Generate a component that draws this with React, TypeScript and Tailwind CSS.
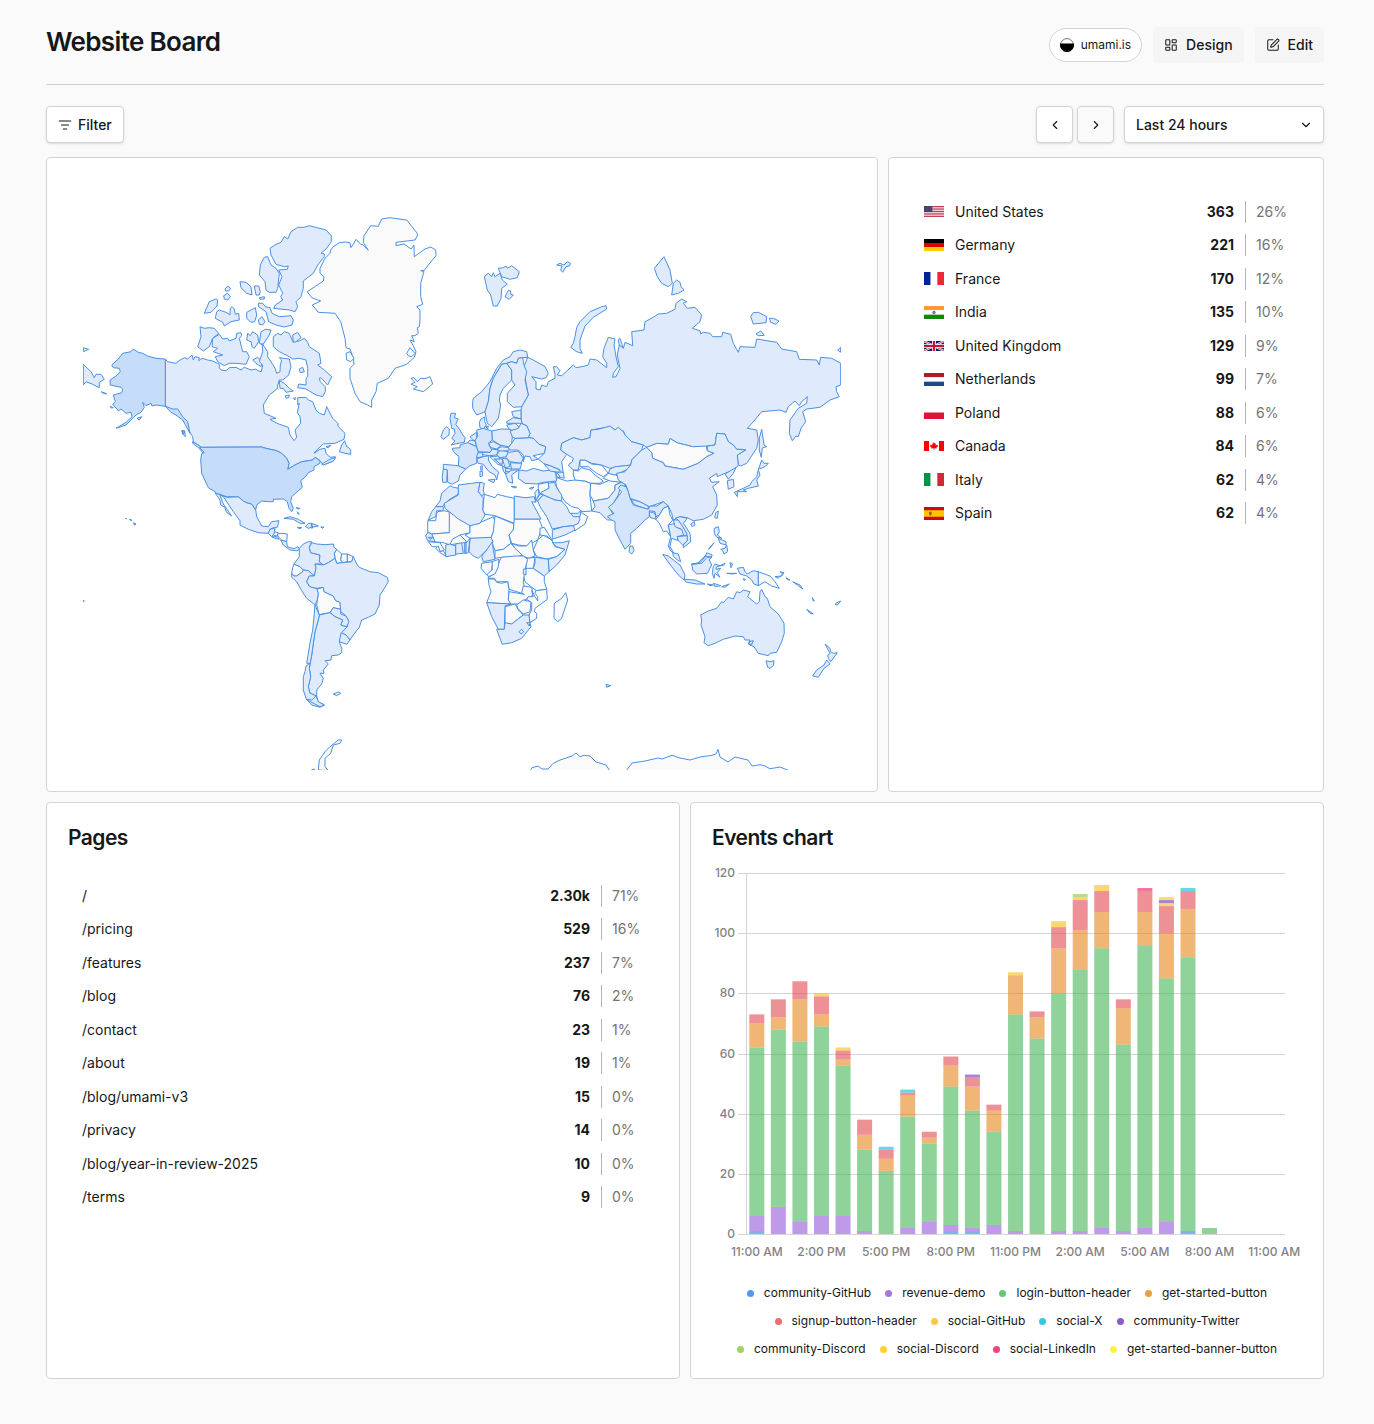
import React from "react";
import { ChevronDown, ChevronLeft, ChevronRight, LayoutDashboard, ListFilter, SquarePen } from "lucide-react";

/* ------------------------------------------------------------------ */
/* World map                                                           */
/* ------------------------------------------------------------------ */

// Outlines are digitised at three times map scale on separate sheets.
// A letter in an outline switches to the sheet with that origin.
const SHEETS: Record<string, [number, number]> = {
  A: [76, 205],
  B: [300, 205],
  C: [540, 240],
  D: [90, 400],
  E: [415, 395],
  F: [415, 500],
  G: [600, 420],
  H: [270, 540],
  K: [500, 740],
};

function outline(data: string) {
  let origin = SHEETS.A;
  let d = "";
  for (const token of data.trim().split(/\s+/)) {
    if (SHEETS[token]) {
      origin = SHEETS[token];
      continue;
    }
    const [x, y] = token.split(",").map(Number);
    d += `${d ? "L" : "M"}${(origin[0] + x / 3).toFixed(1)} ${(origin[1] + y / 3).toFixed(1)}`;
  }
  return d + "Z";
}

const NO_DATA = [
  // Greenland and Iceland
  "B 90,145 92,135 100,125 118,113 135,111 150,113 152,128 160,118 168,103 182,118 190,120 205,136 190,112 192,92 212,62 235,64 245,42 270,38 320,45 352,85 352,92 345,105 288,112 288,122 312,117 333,132 342,120 343,155 375,132 392,126 407,135 408,152 385,180 372,197 362,197 372,199 362,235 362,275 368,298 350,305 360,315 360,345 358,365 352,368 355,385 345,392 335,392 343,410 330,405 340,422 348,440 343,457 320,478 285,490 265,520 232,535 228,560 215,585 215,607 203,600 180,590 165,565 150,520 150,490 162,478 160,460 150,432 138,428 135,400 122,350 105,325 55,322 37,300 62,288 35,278 22,260 70,228 72,215 60,205 60,190 75,160",
  "B 138,445 150,440 162,460 152,470 140,465",
  "B 320,445 330,428 345,445 335,455 325,452",
  "B 333,520 342,518 352,530 362,520 375,521 390,515 398,537 370,560 340,552 352,545 333,538 345,532",
  // Central America
  "D 560,402 575,400 592,402 590,425 575,420 565,410",
  "D 553,395 565,398 560,408 550,405",
  // South America
  "H 200,28 215,42 212,60 218,68 200,70 195,55 193,40",
  "H 215,42 232,42 232,65 218,68 212,60",
  "H 232,42 250,50 245,65 232,65",
  "H 72,72 90,80 100,90 98,95 80,108 72,108 65,100 68,82",
  "H 140,148 160,142 162,155 190,168 197,182 210,185 212,208 190,203 180,218 155,222 148,225 140,195 145,160",
  // Africa
  "F 38,62 62,62 65,40 68,35 85,32 103,35 107,98 50,102 38,95",
  "F 103,35 165,75 165,98 135,105 115,125 105,135 85,128 55,125 50,102 103,98",
  "F 165,75 185,72 235,50 240,65 235,95 228,115 200,115 165,115 150,105 165,98",
  "F 240,48 298,72 295,90 282,105 288,130 265,148 240,152 230,125 228,115 235,95",
  "E 208,298 240,308 247,298 275,305 298,310 298,385 240,362 210,358 203,345",
  "F 298,57 372,57 382,82 375,100 368,120 350,130 335,138 310,135 290,130 282,105 295,90",
  "F 240,152 265,148 288,130 300,145 325,165 300,172 260,172 240,175",
  "F 290,130 310,138 335,138 350,120 355,150 360,168 340,175 325,168 300,145",
  "F 368,120 385,105 410,120 420,140 450,148 425,170 395,177 365,170 355,150",
  "F 375,85 388,82 412,122 395,108 375,105",
  "F 335,175 360,172 355,205 332,208",
  "F 332,205 355,205 388,228 388,245 395,268 365,272 350,262 330,245 325,225",
  "F 260,172 300,168 325,168 338,178 330,208 325,245 330,270 320,280 282,268 278,245 245,245 238,235 218,235 240,218 255,180",
  "F 220,230 215,220 232,210 230,185 252,178 250,200 240,222",
  "F 200,190 232,185 230,210 215,225 198,205",
  "F 220,237 238,237 245,247 260,250 278,245 282,268 280,300 288,312 215,308 228,275 222,255",
  "F 282,275 300,278 328,283 320,280 325,258 350,262 355,285 325,302 310,312 288,312 280,300",
  "F 305,315 325,300 348,305 345,335 325,342 308,325",
  "F 270,320 300,312 310,330 325,345 290,372 270,370",
  "F 395,268 397,298 360,325 358,335 365,340 365,355 345,368 342,345 350,330 350,308 335,298 340,290 355,290 350,272 360,290 368,302 368,290 360,280 362,272",
  "F 452,278 458,300 440,355 428,365 417,355 418,310 440,295",
  "F 40,125 75,128 88,150 78,155 65,140 52,140",
  "F 62,145 70,138 75,155 85,152 95,170 75,158",
  "F 105,135 112,118 135,105 155,125 140,130 120,132",
  // Middle East and Asia
  "E 370,268 400,262 402,280 375,297 370,280",
  "F 440,85 475,77 490,68 493,45 500,38 518,50 510,72 480,92",
  "E 418,245 430,250 455,258 480,255 510,258 527,265 525,300 530,348 500,350 490,340 470,335 450,320 440,305 425,275",
  "E 495,195 510,195 530,207 560,210 580,235 565,245 545,235 520,215 495,215",
  "E 475,225 490,228 500,218 525,225 540,240 565,258 555,265 527,265 510,258 480,255 475,240",
  "E 527,265 555,268 585,255 620,262 600,270 600,285 580,310 535,318 525,300",
  "E 565,250 580,235 600,238 615,250 620,262 585,258",
  "G 138,82 170,70 205,72 210,55 232,68 280,80 318,75 322,92 342,100 320,110 295,130 250,148 195,138 190,128 158,115 155,98",
  "G 178,285 190,265 205,258 210,285 218,300 205,315 212,350 200,333 190,335 178,310 168,298",
  "G 475,455 510,468 525,485 538,505 515,498 495,485 475,497",
  // Antarctica
  "K 90,93 96,83 114,78 126,87 144,87 160,70 180,60 216,48 228,39 240,50 252,46 270,48 288,66 318,75 330,93",
  "K 378,93 396,69 435,63 474,54 486,57 516,46 540,54 570,60 600,51 636,46 648,42 654,28 660,51 684,66 705,51 744,60 756,78 780,74 795,78 810,86 840,81 870,93",
  "H 145,690 148,660 165,635 180,620 205,600 215,600 210,610 190,615 182,640 165,655 165,680 175,692",
  "H 125,689 133,687 136,692",
];

const FEW = [
  // Arctic archipelago
  "A 635,102 625,95 615,112 600,118 582,130 585,150 600,178 625,185 637,183 634,193 608,195 618,215 608,240 620,265 614,275 620,285 598,300 593,310 640,315 657,320 665,305 660,290 675,275 682,250 682,228 712,205 725,180 745,155 745,147 735,145 752,130 766,110 766,92 750,75 700,62 685,67 665,67 645,80",
  "A 565,157 575,155 585,180 600,190 610,205 605,250 600,262 580,262 570,255 567,230 550,210 553,180",
  "A 492,230 510,232 525,245 528,270 512,265 495,248",
  "A 535,243 548,243 553,260 550,270 540,270",
  "A 447,252 455,243 464,250 458,258 449,258",
  "A 443,272 455,265 463,275 455,285 445,282",
  "A 385,325 400,290 420,282 425,285 423,303 405,322",
  "A 418,340 422,320 430,315 450,322 462,330 463,310 468,305 475,312 478,328 488,325 490,345 465,350 445,363 440,352",
  "A 512,322 538,308 542,330 536,350 525,352 512,340",
  "A 547,345 558,335 567,350 560,360 550,358",
  "A 547,295 560,295 568,305 582,308 588,325 610,335 645,332 652,345 648,360 625,366 600,360 578,350 570,320 548,305",
  "A 550,278 565,275 565,282 552,283",
  "A 372,365 385,370 400,368 415,370 428,385 410,400 400,425 382,438 365,425 375,395",
  "A 410,400 430,388 440,402 455,400 460,408 480,400 482,385 495,383 497,392 490,400 500,440 512,440 520,455 510,478 480,475 460,475 445,482 425,470 418,455 440,450 412,440 425,430 408,425",
  "A 515,385 523,392 530,380 545,390 548,410 535,430 528,425 525,410 512,405",
  "A 555,380 568,373 585,375 580,390 560,420 550,415",
  "A 530,465 545,457 560,470 555,485 540,475",
  "A 592,395 605,385 615,390 625,380 640,385 650,410 670,408 685,400 695,412 700,425 730,445 735,475 725,480 745,495 767,515 755,540 735,518 730,520 733,530 748,545 748,560 740,575 720,570 690,552 665,548 668,537 690,540 690,520 695,515 695,490 690,465 670,460 650,462 640,455 610,440 592,425",
  "A 650,390 665,382 675,398 660,410 652,412",
  "A 670,492 680,487 685,500 673,503",
  "A 610,527 625,535 640,550 652,558 630,562 622,550 612,550",
  "A 628,572 640,570 638,578 630,580",
  "A 652,580 658,578 657,585",
  // Canada
  "A 268,462 275,470 300,475 312,465 325,458 335,462 348,450 352,465 357,455 370,458 368,467 378,460 395,465 410,468 430,478 430,488 435,495 450,497 460,488 480,487 495,495 505,487 525,495 540,492 545,497 556,500 560,480 550,470 560,440 558,415 575,440 575,455 590,478 597,490 602,505 612,500 613,480 617,465 610,458 640,462 645,485 638,510 620,525 610,525 605,540 605,550 580,570 562,600 565,625 600,640 D 540,58 560,70 595,82 600,105 612,122 620,112 615,90 632,70 630,50 622,38 628,10 A 665,600 665,578 690,577 697,585 710,590 720,615 730,625 745,630 752,605 770,640 785,655 D 745,80 765,100 762,118 735,130 700,132 680,150 672,160 690,148 705,145 708,160 720,172 735,170 730,183 700,195 690,182 675,172 668,180 635,185 615,195 593,208 597,190 590,175 575,160 560,152 520,143 515,141 335,142 310,125 308,110 295,90 290,70 270,45 245,35 A 268,604",
  "D 307,125 330,138 343,155 338,158 325,142 310,132",
  "D 275,92 284,92 286,110 278,102",
  "D 695,192 720,178 738,172 730,183 700,195",
  "D 708,140 722,136 715,144",
  "D 750,150 755,135 764,122 770,140 775,142 782,150 782,163 765,160 748,155",
  // Mexico, Central America and the Caribbean
  "D 380,280 410,292 445,290 460,303 470,308 485,312 497,330 500,350 515,378 535,380 545,365 567,362 562,382 553,382 540,388 535,400 505,398 475,388 450,375 450,362 430,335 410,305 400,290 390,285 400,312 425,348 408,335 405,322 392,315 390,300 375,278",
  "D 535,400 540,388 555,384 553,400 545,410",
  "D 545,410 562,410 568,418 555,415",
  "D 572,420 590,425 592,440 612,446 624,440 630,448 620,452 600,450 580,435",
  "D 582,355 600,350 625,358 645,370 630,370 610,358",
  "D 647,380 655,370 665,370 685,378 665,382 655,385",
  "D 665,370 663,384 668,384",
  "D 622,382 635,383 627,386",
  "D 692,381 702,381 698,385",
  "D 618,323 630,325 627,328",
  "D 622,335 628,342 625,343",
  // South America
  "H 88,25 100,12 115,5 125,5 118,22 122,38 150,45 148,65 160,72 135,72 138,85 133,108 115,92 100,90 90,80 72,72 88,50",
  "H 125,8 140,12 165,14 190,12 192,22 200,28 193,40 195,55 175,68 160,75 148,65 150,45 122,38 118,22",
  "H 65,100 72,108 80,108 98,95 100,90 115,92 133,108 118,108 110,125 118,138 125,142 140,145 145,160 142,180 135,195 110,175 95,152 80,125 65,112",
  "H 133,108 138,85 135,72 160,75 175,68 195,55 200,70 218,68 245,65 250,50 262,75 268,82 300,95 325,98 352,112 355,125 340,150 330,165 328,195 315,222 295,232 275,240 268,262 250,285 240,300 228,285 213,278 232,260 235,240 225,225 212,215 210,187 197,182 190,168 162,155 160,142 140,145 125,142 118,138 110,125 118,108",
  "H 180,218 190,203 212,208 212,222 228,228 237,245 230,260 220,258 212,255 218,240 195,230",
  "H 213,278 228,285 240,300 230,313 208,305 207,290",
  "H 148,225 180,218 195,230 218,240 212,255 220,258 232,260 213,280 208,305 215,325 215,338 205,345 185,347 183,360 165,362 175,372 160,390 162,400 150,400 160,415 155,432 140,450 140,468 120,460 115,440 122,410 118,385 125,345 130,310 135,275 145,240",
  "H 135,195 148,225 145,240 135,275 130,310 125,345 118,385 122,410 115,440 120,460 140,468 145,485 163,495 150,502 125,495 108,475 100,450 100,410 105,395 108,378 120,370 110,370 120,310 128,270 133,220",
  "H 108,478 125,480 138,468 145,485 163,495 150,500",
  "H 190,462 205,456 212,460 200,467",
  // Eastern tip of Siberia
  "A 22,478 45,500 55,518 60,508 75,508 85,523 70,532 70,548 48,537 30,530 22,540",
  "A 22,428 38,433 22,440",
  // Svalbard and the Arctic islands
  "B 553,215 565,205 575,215 580,203 585,215 600,205 607,225 622,238 605,250 603,280 592,303 580,303 572,270 562,255",
  "B 595,190 610,188 618,183 622,190 635,182 658,200 652,218 630,223 605,215",
  "B 620,265 625,256 632,258 632,268 640,270 628,283 615,275",
  "C 50,75 60,70 72,75 82,65 92,70 88,78 78,80 68,97 62,90 66,78",
  "C 110,262 120,245 150,215 185,200 198,197 200,207 160,232 135,258 120,300 120,325 127,340 110,335 92,322 100,310 105,290",
  "C 343,85 372,50 390,90 397,130 385,140 365,130 352,110",
  "C 395,165 400,130 410,120 420,127 423,140 432,150 415,160",
  "C 632,230 640,218 655,217 680,230 678,248 640,252",
  "C 688,235 700,235 717,243 708,253 692,247",
  "C 648,282 662,273 673,286 655,287",
  "C 893,330 903,322 901,337",
  "C 235,300 240,295 248,320 240,328",
  // Russia
  "B 683,457 700,465 735,485 745,505 738,518 725,522 695,515 708,530 708,552 720,555 725,540 740,545 745,530 765,520 765,508 760,485 770,485 780,497 772,510 785,512 C 100,375 108,383 135,378 145,375 150,357 170,360 200,383 200,370 188,350 192,325 205,292 225,297 222,315 228,350 235,380 220,400 218,412 228,410 240,385 232,345 238,315 250,325 255,307 278,317 275,275 312,270 315,245 340,232 355,222 380,220 405,208 408,190 425,177 440,185 430,190 442,205 465,202 485,225 480,245 457,265 480,272 482,282 490,277 510,280 518,290 545,290 548,277 572,283 580,310 595,337 600,320 645,322 650,297 710,307 725,327 770,335 778,358 830,360 838,375 842,352 875,355 902,370 902,435 888,440 890,455 898,470 870,480 840,502 800,507 788,515 797,545 783,565 775,590 768,588 757,602 748,580 750,540 775,505 800,490 802,470 785,485 778,497 765,483 745,500 738,517 720,510 665,515 640,545 622,565 650,570 G 470,30 475,60 470,85 440,130 422,138 415,135 413,118 412,105 437,90 428,88 410,88 400,75 385,65 375,42 350,40 345,75 320,78 280,80 232,68 210,55 205,72 170,70 140,82 130,75 95,65 75,45 70,32 55,35 30,20 E 528,105 525,128 500,135 475,128 440,145 437,165 455,178 440,200 445,235 430,222 405,212 385,205 370,192 388,175 392,155 372,148 355,130 340,128 345,115 335,92 318,85 318,72 318,45 B 665,605 685,570 670,490",
  "G 478,90 478,55 485,28 492,75 500,80 487,84 484,112",
  // Scandinavia and the Baltics
  "B 518,590 520,580 545,560 570,530 590,490 610,465 630,455 640,440 660,435 680,440 683,457 668,458 655,460 650,475 635,470 620,475 605,478 580,520 570,550 565,590 555,620 530,630 518,610",
  "B 605,478 620,475 635,495 635,525 610,550 600,570 598,585 602,600 595,640 575,665 562,655 555,620 565,590 570,550 580,520",
  "B 620,475 635,470 650,475 655,460 668,458 672,480 680,500 675,525 685,570 665,605 640,607 622,590 622,565 645,540 635,525 635,495",
  "E 193,82 198,72 209,66 209,80 214,90 205,103 195,98",
  "E 213,95 220,93 218,103",
  "E 290,50 318,45 318,72 295,65",
  "E 275,80 295,68 318,72 322,85 300,85 275,85",
  "E 275,90 300,85 312,95 310,102 285,108",
  // British Isles and western Europe
  "E 85,105 95,95 103,102 102,120 85,133 78,125",
  "E 85,208 130,212 152,222 135,240 130,258 112,268 98,262 97,225 85,222",
  "E 85,222 97,225 95,262 83,262 82,245",
  "E 165,125 185,112 185,130 178,138",
  "E 158,143 165,135 180,138 185,155",
  "E 230,108 260,102 288,103 292,125 290,145 280,155 255,150 232,135",
  "E 220,145 235,140 258,152 245,162 228,158",
  "E 195,172 225,172 230,162 250,165 245,180 220,182 200,178",
  "E 183,175 200,172 205,185 185,188",
  "E 185,192 205,185 222,182 220,195 232,215 252,232 248,240 245,255 240,240 222,230 205,208 190,205",
  "E 220,255 240,253 236,263",
  "E 195,228 203,230 202,243 195,245",
  "E 197,214 202,212 202,226 197,224",
  // Central and eastern Europe
  "E 245,180 255,165 280,170 275,185 255,188",
  "E 245,162 260,155 282,158 282,167 255,168",
  "E 280,172 310,168 325,190 318,205 285,200 272,188",
  "E 285,203 320,205 315,222 290,222",
  "E 262,190 278,192 285,215 270,218",
  "E 240,190 262,192 262,208 250,205",
  "E 225,185 250,183 255,192 238,192 262,212 248,208",
  "E 262,212 272,220 272,238 265,228",
  "E 272,220 290,222 285,230 272,230",
  "E 272,238 290,225 312,225 300,232 290,240 293,265 280,260",
  "E 288,274 305,276 300,279",
  "E 343,280 357,276 350,283",
  "E 290,145 300,130 340,128 355,130 372,148 392,155 388,175 355,182 370,192 350,197 345,185 330,183 325,200 325,180 310,165 285,165 280,158",
  "E 292,125 285,108 310,100 318,85 335,92 345,115 340,128 300,130",
  // Turkey, the Caucasus and the Middle East
  "E 312,225 335,228 355,220 385,228 408,225 422,232 425,258 385,262 365,267 330,265 310,250",
  "E 388,208 405,212 435,225 430,232 405,228",
  "E 420,232 445,232 448,250 430,245",
  "E 422,232 432,240 435,250 425,245",
  "E 400,265 418,262 425,278 440,300 440,318 420,315 385,300 378,292 402,280",
  "E 360,292 370,282 372,298 362,318",
  "E 362,318 375,297 385,300 368,318",
  "E 368,318 385,300 420,315 440,318 455,335 465,355 490,360 495,372 490,385 475,392 445,395 412,402 395,365 375,335",
  "F 412,90 445,80 475,77 480,90 450,105 412,118",
  "E 467,355 490,355 498,345 495,365 475,365",
  // Central and South Asia
  "E 437,165 440,145 475,128 500,135 525,128 528,105 550,103 585,93 600,105 610,97 625,110 630,120 650,140 G 130,75 125,90 95,120 92,135 55,140 30,145 E 590,222 560,210 530,205 510,195 495,195 490,225 475,225 460,210 472,200 475,190 455,178",
  "E 585,222 600,215 650,210 640,222 600,240 580,235",
  "E 535,318 580,310 600,285 600,270 620,262 G 78,195 60,205 55,225 40,250 28,262 45,295 35,300 22,300 0,278 E 530,348 540,335",
  "G 92,238 120,245 148,260 145,268 105,255",
  "G 148,275 165,280 168,298 150,292",
  "G 145,258 165,258 163,266 145,266",
  "G 90,378 98,378 102,392 95,402 87,395",
  // East Asia
  "G 140,82 125,90 95,120 92,135 75,155 50,160 55,180 78,195 85,215 90,235 120,245 148,260 190,245 205,258 215,280 220,300 240,290 262,293 280,302 310,298 335,285 352,255 350,225 338,200 358,185 335,187 328,175 350,160 352,170 375,160 395,152 412,140 415,135 413,118 412,105 437,90 410,88 400,75 385,65 375,42 350,40 345,75 322,78 322,92 342,100 320,110 295,130 250,148 195,138 190,128 158,115 155,98",
  "G 375,162 395,150 408,142 400,160 385,178",
  "G 382,182 400,178 402,200 385,208",
  "G 475,150 480,165 470,180 475,198 445,205 430,210 440,215 425,215 412,215 412,230 403,217 430,205 450,195 455,185 470,170",
  "G 485,120 492,130 505,130 495,140 475,148 480,135",
  "G 347,278 355,273 352,295 344,293",
  "G 272,312 283,305 285,315 277,320",
  // Southeast Asia
  "G 205,315 225,310 235,325 255,330 250,345 232,350 235,362 215,355 210,380 222,400 212,393 205,378 212,350",
  "G 220,300 235,300 250,320 262,345 252,348 245,328 225,320",
  "G 225,295 240,290 262,295 250,310 270,340 272,365 250,383 250,375 262,362 260,340 245,315 235,300",
  "G 232,350 262,347 262,362 248,375 235,362",
  "G 218,398 235,402 242,425 232,420 220,408",
  "G 188,403 205,408 240,435 255,465 252,480 235,465 215,440",
  "G 252,478 285,480 315,492 290,492 258,486",
  "G 275,432 290,432 318,405 320,398 337,405 328,420 335,435 322,460 290,462 278,450",
  "G 275,432 300,428 318,408 335,412 322,412 305,430",
  "G 340,440 345,432 360,437 375,430 372,435 350,440 348,448 362,445 352,458 360,472 345,460 342,475 337,460",
  "G 343,325 355,320 358,335 352,345 365,355 350,352 343,340",
  "G 355,355 378,365 378,375 360,370",
  "G 362,388 375,385 380,375 383,395 372,402 368,392",
  "G 325,388 342,368 330,385",
  "G 322,492 340,495 330,497",
  "G 340,490 362,497 345,500",
  "G 365,500 388,492 375,502",
  "G 380,460 410,460 395,462",
  "G 390,428 398,432 393,443",
  "G 430,476 436,478 433,482",
  "G 412,445 430,442 435,455 442,462 460,452 475,455 475,497 462,492 455,480 440,468 420,462",
  "G 525,470 545,468 552,458 540,455 548,462 535,475",
  "G 558,473 570,480 562,479",
  "G 578,485 600,495 608,507 595,497",
  "G 637,533 643,543 640,543",
  "G 620,568 640,582 630,580",
  "G 705,553 710,548 722,543 712,555",
  "A 22,1186 25,1188 22,1190",
  // Australia and New Zealand
  "G 302,585 325,573 350,565 365,545 370,548 385,532 400,537 410,515 420,518 430,510 450,515 443,530 470,552 478,545 480,515 485,508 495,530 502,535 510,560 535,582 552,610 553,640 545,665 530,697 510,700 505,707 475,700 462,680 445,672 450,660 435,660 430,650 405,648 370,658 345,670 325,677 312,668 315,650 303,615 305,600",
  "G 447,665 460,662 453,678",
  "G 498,722 510,725 522,722 520,737 510,745 503,742",
  "G 675,672 690,685 692,695 700,700 712,698 700,715 692,725 685,715 683,705 690,700",
  "G 680,720 690,732 672,745 655,772 638,768 650,750 672,735",
  "G 18,793 32,797 20,802",
  // Africa
  "E 105,272 115,277 132,280 130,298 105,312 88,328 82,335 62,335 75,318 80,295",
  "E 85,335 85,347 65,347 62,365 40,375 50,350 62,335",
  "E 130,270 170,265 195,262 190,290 205,310 203,345 210,360 195,385 165,392 130,372 90,340 88,325 130,300",
  "E 195,262 208,265 205,285 208,298 200,302 190,290",
  "E 298,303 330,308 358,305 362,322 350,320 378,372 298,372",
  "F 165,115 228,112 234,125 215,150 200,165 190,175 175,168 162,155",
  "F 232,125 235,150 240,178 205,185 200,168 215,150",
  "F 412,128 440,128 463,122 450,165 425,195 402,215 400,178 425,170 450,148 425,140",
  "F 360,172 400,178 402,215 388,228 355,205 360,190",
  "F 215,308 288,312 270,318 268,388 250,388 230,350",
  "F 245,388 268,388 270,368 290,372 325,345 342,345 345,370 348,380 320,415 290,428 262,433 255,415",
  "F 312,395 320,388 326,395 318,402",
  "F 335,368 345,368 343,378",
  "F 38,97 50,102 60,125 38,122 32,108",
  "F 40,112 55,112 45,118",
  "F 92,135 105,132 122,138 122,165 92,170",
  "F 122,132 140,128 145,160 122,162",
  "F 148,130 153,128 153,160 148,160",
  "F 153,130 165,115 160,158 153,160",
  "F 325,208 333,206 333,225 325,222",
];

const SOME = [
  // United Kingdom, France, Germany and India
  "E 108,55 122,55 118,68 130,72 122,88 135,105 140,115 150,128 148,142 130,145 108,150 120,138 110,130 120,115 118,102 110,100 105,70",
  "E 112,160 135,158 135,150 158,143 185,155 190,170 185,185 185,205 165,212 152,222 130,212 132,185 115,170",
  "E 185,105 205,100 230,108 232,135 220,145 230,165 225,172 190,170 185,155 180,135 188,125",
  "G 62,195 78,200 85,215 90,235 100,255 145,268 150,258 170,258 190,245 205,258 190,265 178,285 168,290 165,275 148,272 148,290 135,300 110,325 92,340 92,370 75,388 60,360 45,330 45,305 35,300 22,290 42,280 25,262 40,250 65,215 55,205",
];

const MANY = [
  // United States, Alaska and Hawaii
  "D 335,142 515,141 520,143 560,152 575,160 590,175 597,190 593,208 615,195 635,185 668,180 675,172 690,182 690,190 672,200 672,210 655,218 645,232 632,242 637,262 605,290 602,305 610,325 605,335 597,325 592,305 580,297 550,298 550,305 535,305 515,303 500,315 497,330 485,312 470,308 460,303 445,290 410,290 380,280 375,275 355,263 335,220 332,180 335,160 343,158 328,142",
  "A 268,462 240,460 215,453 200,445 187,442 172,432 165,440 140,445 127,462 107,480 112,488 130,490 133,500 120,513 102,525 103,540 135,547 140,553 137,563 112,570 118,590 110,598 128,618 135,612 150,625 165,622 168,635 150,652 120,670 150,660 180,630 195,622 205,607 200,592 210,602 225,595 228,603 240,600 268,604",
  "A 268,604 290,612 305,612 320,635 335,650 342,685 320,645 300,630 285,622",
  "A 183,640 197,635 190,645",
  "A 75,560 92,566 85,566",
  "A 103,604 112,608 105,609",
  "A 318,677 325,679 323,688",
  "D 131,368 138,372 133,376",
  "D 118,358 126,361 122,361",
  "D 107,355 110,356 108,357",
];

const MAP_LEVELS = [
  { className: "fill-[#fafafa]", shapes: NO_DATA },
  { className: "fill-[#dfebfc]", shapes: FEW },
  { className: "fill-[#d4e5fb]", shapes: SOME },
  { className: "fill-[#c5dcfa]", shapes: MANY },
];

function WorldMap() {
  return (
    <svg viewBox="83 193 758 577" className="block w-full" role="img" aria-label="Visitors by country">
      <g className="stroke-[#4a90e4] stroke-1" strokeLinejoin="round">
        {MAP_LEVELS.map((level) => (
          <g key={level.className} className={level.className}>
            {level.shapes.map((shape) => (
              <path key={shape} d={outline(shape)} />
            ))}
          </g>
        ))}
      </g>
    </svg>
  );
}

/* ------------------------------------------------------------------ */
/* Flags                                                               */
/* ------------------------------------------------------------------ */

function Bands({ colors, vertical = false }: { colors: string[]; vertical?: boolean }) {
  const size = (vertical ? 60 : 36) / colors.length;
  return (
    <>
      {colors.map((color, i) => (
        <rect
          key={i}
          x={vertical ? i * size : 0}
          y={vertical ? 0 : i * size}
          width={vertical ? size : 60}
          height={vertical ? 36 : size}
          fill={color}
        />
      ))}
    </>
  );
}

const FLAGS: Record<string, { h: number; art: React.ReactNode }> = {
  "United States": {
    h: 11,
    art: (
      <>
        <rect width="60" height="36" fill="#fff" />
        {[0, 1, 2, 3, 4, 5, 6].map((i) => (
          <rect key={i} y={i * 5.54} width="60" height="2.77" fill="#b22234" />
        ))}
        <rect width="25" height="19.4" fill="#3c3b6e" />
        {[3, 8, 13].map((y) => (
          <path key={y} d={`M2 ${y + 1}H23`} stroke="#fff" strokeOpacity=".6" strokeWidth="1.2" strokeDasharray="1.5 2.5" />
        ))}
      </>
    ),
  },
  Germany: { h: 12, art: <Bands colors={["#000", "#d00", "#ffce00"]} /> },
  France: { h: 13, art: <Bands vertical colors={["#002395", "#fff", "#ed2939"]} /> },
  India: {
    h: 13,
    art: (
      <>
        <Bands colors={["#ff9933", "#fff", "#128807"]} />
        <circle cx="30" cy="18" r="4" fill="#8888bb" stroke="#000080" />
      </>
    ),
  },
  "United Kingdom": {
    h: 10,
    art: (
      <>
        <rect width="60" height="36" fill="#012169" />
        <path d="M0 0L60 36M60 0L0 36" stroke="#fff" strokeWidth="7" />
        <path d="M0 0L60 36M60 0L0 36" stroke="#c8102e" strokeWidth="2.5" />
        <path d="M30 0V36M0 18H60" stroke="#fff" strokeWidth="12" />
        <path d="M30 0V36M0 18H60" stroke="#c8102e" strokeWidth="7" />
      </>
    ),
  },
  Netherlands: { h: 13, art: <Bands colors={["#ae1c28", "#fff", "#21468b"]} /> },
  Poland: { h: 13, art: <Bands colors={["#fff", "#dc143c"]} /> },
  Canada: {
    h: 10,
    art: (
      <>
        <rect width="60" height="36" fill="#fff" />
        <path d="M0 0H15V36H0ZM45 0H60V36H45Z" fill="#f00" />
        <path d="M30 4L33 10L36 9L35 16L40 13L41 17L43 18L37 24L38 27L31 26V32H29V26L22 27L23 24L17 18L19 17L20 13L25 16L24 9L27 10Z" fill="#f00" />
      </>
    ),
  },
  Italy: { h: 13, art: <Bands vertical colors={["#009246", "#fff", "#ce2b37"]} /> },
  Spain: {
    h: 13,
    art: (
      <>
        <rect width="60" height="36" fill="#c60b1e" />
        <rect y="9" width="60" height="18" fill="#ffc400" />
        <path d="M15 13H23V21L19 24L15 21Z" fill="#ad5a1a" />
      </>
    ),
  },
};

function Flag({ country }: { country: string }) {
  const flag = FLAGS[country];
  return (
    <svg viewBox="0 0 60 36" width="20" height={flag.h} preserveAspectRatio="none" className="mr-[11px] shrink-0" aria-hidden="true">
      {flag.art}
    </svg>
  );
}

/* ------------------------------------------------------------------ */
/* Metric lists                                                        */
/* ------------------------------------------------------------------ */

type Metric = [name: string, value: string, percent: string];

const COUNTRIES: Metric[] = [
  ["United States", "363", "26%"],
  ["Germany", "221", "16%"],
  ["France", "170", "12%"],
  ["India", "135", "10%"],
  ["United Kingdom", "129", "9%"],
  ["Netherlands", "99", "7%"],
  ["Poland", "88", "6%"],
  ["Canada", "84", "6%"],
  ["Italy", "62", "4%"],
  ["Spain", "62", "4%"],
];

const PAGES: Metric[] = [
  ["/", "2.30k", "71%"],
  ["/pricing", "529", "16%"],
  ["/features", "237", "7%"],
  ["/blog", "76", "2%"],
  ["/contact", "23", "1%"],
  ["/about", "19", "1%"],
  ["/blog/umami-v3", "15", "0%"],
  ["/privacy", "14", "0%"],
  ["/blog/year-in-review-2025", "10", "0%"],
  ["/terms", "9", "0%"],
];

function MetricList({ rows, flags = false }: { rows: Metric[]; flags?: boolean }) {
  return (
    <ul className="grid h-[335px] auto-rows-fr text-sm">
      {rows.map(([name, value, percent]) => (
        <li key={name} className="flex items-center">
          {flags && <Flag country={name} />}
          <span className="grow truncate">{name}</span>
          <span className="font-bold">{value}</span>
          <span className="ml-[11px] flex h-[22px] w-[43px] items-center border-l border-[#b3b3b3] pl-2.5 text-[#737373]">
            {percent}
          </span>
        </li>
      ))}
    </ul>
  );
}

/* ------------------------------------------------------------------ */
/* Events chart                                                        */
/* ------------------------------------------------------------------ */

const SERIES = [
  { name: "community-GitHub", color: "#2680eb" },
  { name: "revenue-demo", color: "#9256d9" },
  { name: "login-button-header", color: "#44b556" },
  { name: "get-started-button", color: "#e68619" },
  { name: "signup-button-header", color: "#e34850" },
  { name: "social-GitHub", color: "#f7bd12" },
  { name: "social-X", color: "#01bad7" },
  { name: "community-Twitter", color: "#6734bc" },
  { name: "community-Discord", color: "#89c541" },
  { name: "social-Discord", color: "#ffc301" },
  { name: "social-LinkedIn", color: "#ec1562" },
  { name: "get-started-banner-button", color: "#ffec16" },
];

// One entry per hour: [series index, count] from the bottom up.
const HOURS: [number, number][][] = [
  [[0, 1], [1, 5], [2, 56], [3, 8], [4, 3]],
  [[1, 9], [2, 59], [3, 4], [4, 6]],
  [[1, 4], [2, 60], [3, 14], [4, 6]],
  [[1, 6], [2, 63], [3, 4], [4, 6], [5, 1]],
  [[1, 6], [2, 50], [3, 2], [4, 3], [5, 1]],
  [[1, 1], [2, 27], [3, 5], [4, 5]],
  [[2, 21], [3, 4], [4, 3], [6, 1]],
  [[1, 2], [2, 37], [3, 7], [4, 1], [6, 1]],
  [[1, 4], [2, 26], [3, 2], [4, 2]],
  [[0, 1], [1, 2], [2, 46], [3, 7], [4, 3]],
  [[0, 1], [1, 1], [2, 39], [3, 8], [4, 3], [7, 1]],
  [[1, 3], [2, 31], [3, 7], [4, 2]],
  [[1, 1], [2, 72], [3, 13], [5, 1]],
  [[2, 65], [3, 7], [4, 2]],
  [[1, 1], [2, 79], [3, 15], [4, 7], [5, 2]],
  [[1, 1], [2, 87], [3, 13], [4, 10], [5, 1], [8, 1]],
  [[1, 2], [2, 93], [3, 12], [4, 7], [5, 2]],
  [[1, 1], [2, 62], [3, 12], [4, 3]],
  [[1, 2], [2, 94], [3, 11], [4, 7], [10, 1]],
  [[1, 4], [2, 81], [3, 15], [4, 9], [5, 1], [7, 1], [9, 1]],
  [[0, 1], [2, 91], [3, 16], [4, 6], [6, 1]],
  [[2, 2]],
];

const TIMES = ["11:00 AM", "2:00 PM", "5:00 PM", "8:00 PM", "11:00 PM", "2:00 AM", "5:00 AM", "8:00 AM", "11:00 AM"];

const LEFT = 34;
const RIGHT = 573;
const BASE = 374;
const UNIT = 361 / 120;
const STEP = (RIGHT - LEFT) / 25;

function EventsChart() {
  return (
    <svg viewBox="0 0 590 402" className="mt-2 block w-full" role="img" aria-label="Events per hour">
      <g className="stroke-[#d4d4d4]">
        {[0, 20, 40, 60, 80, 100, 120].map((v) => {
          const y = Math.round(BASE - v * UNIT) + 0.5;
          return <path key={v} d={`M${LEFT - 8} ${y}H${RIGHT}`} />;
        })}
        <path d={`M${LEFT + 0.5} 13V${BASE}`} />
      </g>
      {HOURS.map((stack, hour) => {
        let total = 0;
        return (
          <g key={hour}>
            {stack.map(([series, count]) => {
              total += count;
              return (
                <rect
                  key={series}
                  x={LEFT + STEP * hour + 3.3}
                  y={BASE - total * UNIT}
                  width="15"
                  height={count * UNIT}
                  fill={SERIES[series].color}
                  fillOpacity="0.6"
                />
              );
            })}
          </g>
        );
      })}
      <g className="fill-[#828282] text-xs font-medium">
        {[0, 20, 40, 60, 80, 100, 120].map((v) => (
          <text key={v} x="23" y={BASE - v * UNIT + 4} textAnchor="end">
            {v}
          </text>
        ))}
        {TIMES.map((time, i) => (
          <text key={i} x={LEFT + STEP * (i * 3 + 0.5)} y="396" textAnchor="middle">
            {time}
          </text>
        ))}
      </g>
    </svg>
  );
}

function Legend() {
  return (
    <ul className="mt-[17px] flex flex-wrap justify-center gap-x-3.5 text-xs leading-7">
      {SERIES.map(({ name, color }) => (
        <li key={name} className="flex items-center gap-2.5">
          <span className="size-[7px] rounded-full opacity-80" style={{ backgroundColor: color }} />
          {name}
        </li>
      ))}
    </ul>
  );
}

/* ------------------------------------------------------------------ */
/* Page                                                                */
/* ------------------------------------------------------------------ */

const CARD = "min-w-0 rounded border border-[#d4d4d4] bg-white";
const CONTROL = "flex h-[37px] items-center rounded border border-[#d4d4d4] shadow-sm";
const QUIET = "flex h-9 items-center gap-2 rounded bg-[#f5f5f5] px-[11px] text-sm font-medium";

export default function App() {
  return (
    <div className="min-h-screen bg-[#fafafa] pb-[45px] pl-[46px] pr-[50px] font-['Inter',sans-serif] text-[#171717]">
      <header className="flex h-[85px] items-start justify-between border-b border-[#d0d0d0] pt-[27px]">
        <h1 className="text-[26px] leading-[30px] font-semibold tracking-tight">Website Board</h1>
        <div className="flex items-center gap-[11px]">
          <a href="#site" className="flex h-[34px] items-center gap-[7px] rounded-full border border-[#d4d4d4] bg-white px-2.5 text-xs">
            <svg viewBox="0 0 14 14" className="size-3.5" aria-hidden="true">
              <circle cx="7" cy="7" r="6.4" fill="#fff" stroke="#555" strokeWidth=".8" />
              <path d="M0 5.5H14A7 7.5 0 0 1 7 14A7 7.5 0 0 1 0 5.5Z" fill="#000" />
            </svg>
            umami.is
          </a>
          <button type="button" className={QUIET}>
            <LayoutDashboard size={14} strokeWidth={1.75} />
            Design
          </button>
          <button type="button" className={QUIET}>
            <SquarePen size={14} strokeWidth={1.75} />
            Edit
          </button>
        </div>
      </header>

      <div className="mt-[21px] flex items-center">
        <button type="button" className={`${CONTROL} gap-1.5 bg-white px-[11px] text-sm font-medium`}>
          <ListFilter size={14} strokeWidth={1.75} />
          Filter
        </button>
        <button type="button" aria-label="Previous period" className={`${CONTROL} ml-auto w-[37px] justify-center bg-white`}>
          <ChevronLeft size={14} />
        </button>
        <button type="button" aria-label="Next period" className={`${CONTROL} ml-1 w-[37px] justify-center bg-[#fafafa]`}>
          <ChevronRight size={14} />
        </button>
        <div className="relative ml-2.5 w-[200px]">
          <select aria-label="Date range" className={`${CONTROL} w-full appearance-none bg-white px-[11px] text-sm font-medium`}>
            <option>Last 24 hours</option>
          </select>
          <ChevronDown size={14} className="pointer-events-none absolute top-3 right-[11px]" />
        </div>
      </div>

      <main className="mt-3.5 grid gap-2.5">
        <div className="grid grid-cols-[832fr_436fr] gap-2.5">
          <section className={`${CARD} px-9 pt-[35px] pb-[21px]`}>
            <WorldMap />
          </section>
          <section className={`${CARD} px-[35px] pt-[37px]`}>
            <MetricList rows={COUNTRIES} flags />
          </section>
        </div>
        <div className="grid grid-cols-2 gap-2.5">
          <section className={`${CARD} px-[21px] pt-[21px]`}>
            <h2 className="text-[21px] leading-7 font-semibold tracking-tight">Pages</h2>
            <div className="mt-[27px] px-3.5">
              <MetricList rows={PAGES} />
            </div>
          </section>
          <section className={`${CARD} px-[21px] pt-[21px] pb-[15px]`}>
            <h2 className="text-[21px] leading-7 font-semibold tracking-tight">Events chart</h2>
            <EventsChart />
            <Legend />
          </section>
        </div>
      </main>
    </div>
  );
}
